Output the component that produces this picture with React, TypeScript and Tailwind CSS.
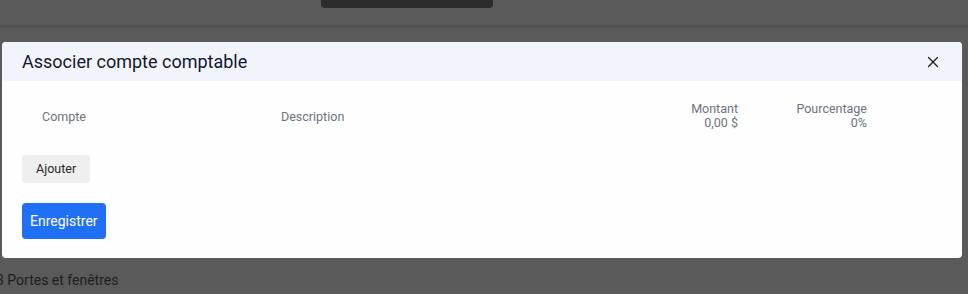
import React from 'react';
import { X } from 'lucide-react';

const App = () => {
	return (
		<div className="relative h-[294px] w-[968px] overflow-hidden bg-[#5a5a5a] font-['Roboto',sans-serif]">
			{/* page behind the overlay */}
			<div className="pl-[321px]">
				<div className="h-2 w-[172px] rounded-b bg-[#2c2c2d]" />
			</div>
			<div className="mt-[17px] h-[3px] bg-[#55554f]" />
			<div className="mt-[242px] text-[14px] text-[#1f1f1f]">
				<span className="ml-[-4px] whitespace-nowrap">3 Portes et fenêtres</span>
			</div>

			{/* modal */}
			<div className="absolute left-[2px] top-[42px] flex h-[216px] w-[960px] flex-col overflow-hidden rounded bg-[#fefefe]">
				<div className="flex h-[39px] items-center justify-between bg-[#f1f4fb] pl-5 pr-5">
					<h2 className="text-[18px] text-[#15182e]">Associer compte comptable</h2>
					<button className="text-[#1a1a1a]">
						<X size={18} strokeWidth={1.6} />
					</button>
				</div>
				<div className="flex flex-col px-5 pt-[21px]">
					<div className="flex h-[28px] text-[12.5px] leading-[14px] text-[#6b7280]">
						<div className="w-[259px] self-center pl-5 pt-[2px]">Compte</div>
						<div className="w-[345px] self-center pt-[2px]">Description</div>
						<div className="w-[112px] text-right">
							<div>Montant</div>
							<div>0,00 $</div>
						</div>
						<div className="w-[129px] text-right">
							<div>Pourcentage</div>
							<div>0%</div>
						</div>
					</div>
					<div className="mt-[25px]">
						<button className="h-[28px] rounded-sm bg-[#efefef] px-[14px] text-[12.5px] text-[#2a2a2a]">
							Ajouter
						</button>
					</div>
					<div className="mt-[20px]">
						<button className="h-[36px] rounded-sm bg-[#2070f5] px-2 text-[14px] text-white">
							Enregistrer
						</button>
					</div>
				</div>
			</div>
		</div>
	);
};

export default App;
